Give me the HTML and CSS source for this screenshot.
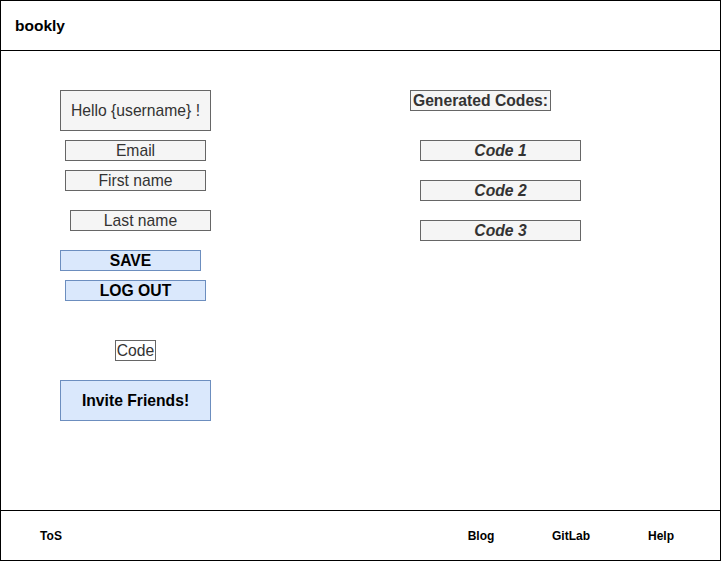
FILE: index.html
```html
<!DOCTYPE html>
<html>
<head>
<meta charset="utf-8">
<title>bookly</title>
<link rel="stylesheet" href="styles.css">
</head>
<body>
<div class="frame">
  <header class="header">bookly</header>
  <main class="main">
    <section class="col-left">
      <div class="box gray big hello">Hello {username} !</div>
      <div class="box gray field email">Email</div>
      <div class="box gray field first">First name</div>
      <div class="box gray field last">Last name</div>
      <div class="box blue field save">SAVE</div>
      <div class="box blue field logout">LOG OUT</div>
      <div class="box plain code">Code</div>
      <div class="box blue big invite">Invite Friends!</div>
    </section>
    <section class="col-right">
      <div class="box gray gen">Generated Codes:</div>
      <div class="box gray codeitem first-code">Code 1</div>
      <div class="box gray codeitem">Code 2</div>
      <div class="box gray codeitem">Code 3</div>
    </section>
  </main>
  <footer class="footer">
    <span class="link">ToS</span>
    <span class="spacer"></span>
    <span class="link">Blog</span>
    <span class="link">GitLab</span>
    <span class="link">Help</span>
  </footer>
</div>
</body>
</html>
```

FILE: styles.css
```css
html, body {
  margin: 0;
  padding: 0;
  background: #fff;
}

body {
  font-family: "Liberation Sans", Arial, Helvetica, sans-serif;
}

.frame {
  width: 721px;
  height: 561px;
  box-sizing: border-box;
  border: 1px solid #000;
  display: flex;
  flex-direction: column;
}

.header {
  height: 50px;
  box-sizing: border-box;
  border-bottom: 1px solid #000;
  padding-left: 14px;
  display: flex;
  align-items: center;
  font-size: 15.5px;
  font-weight: bold;
  color: #000;
}

.main {
  flex: 1;
  display: flex;
}

.col-left {
  width: 409px;
  box-sizing: border-box;
  padding-left: 59px;
  padding-top: 39px;
  display: flex;
  flex-direction: column;
  align-items: flex-start;
}

.col-right {
  padding-top: 39px;
  display: flex;
  flex-direction: column;
  align-items: flex-start;
}

.box {
  box-sizing: border-box;
  display: flex;
  align-items: center;
  justify-content: center;
  font-size: 15.7px;
  white-space: nowrap;
}

.gray {
  background: #f5f5f5;
  border: 1px solid #666666;
  color: #333333;
}

.blue {
  background: #dae8fc;
  border: 1px solid #6c8ebf;
  color: #000;
  font-weight: bold;
}

.plain {
  background: #fff;
  border: 1px solid #666666;
  color: #333333;
}

.big {
  width: 151px;
  height: 41px;
}

.field {
  width: 141px;
  height: 21px;
}

.hello { margin-left: 0; }
.email { margin-top: 9px; margin-left: 5px; }
.first { margin-top: 9px; margin-left: 5px; }
.last { margin-top: 19px; margin-left: 10px; }
.save { margin-top: 19px; margin-left: 0; }
.logout { margin-top: 9px; margin-left: 5px; }

.code {
  width: 41px;
  height: 21px;
  margin-top: 39px;
  margin-left: 55px;
}

.invite { margin-top: 19px; }

.gen {
  width: 141px;
  height: 21px;
  font-weight: bold;
}

.codeitem {
  width: 161px;
  height: 21px;
  margin-left: 10px;
  margin-top: 19px;
  font-weight: bold;
  font-style: italic;
}

.codeitem.first-code { margin-top: 29px; }

.footer {
  height: 50px;
  box-sizing: border-box;
  border-top: 1px solid #000;
  display: flex;
  align-items: center;
  padding-left: 20px;
  padding-right: 29px;
  gap: 30px;
}

.link {
  width: 60px;
  text-align: center;
  font-size: 12px;
  font-weight: bold;
  color: #000;
}

.spacer {
  flex: 1;
}
```
